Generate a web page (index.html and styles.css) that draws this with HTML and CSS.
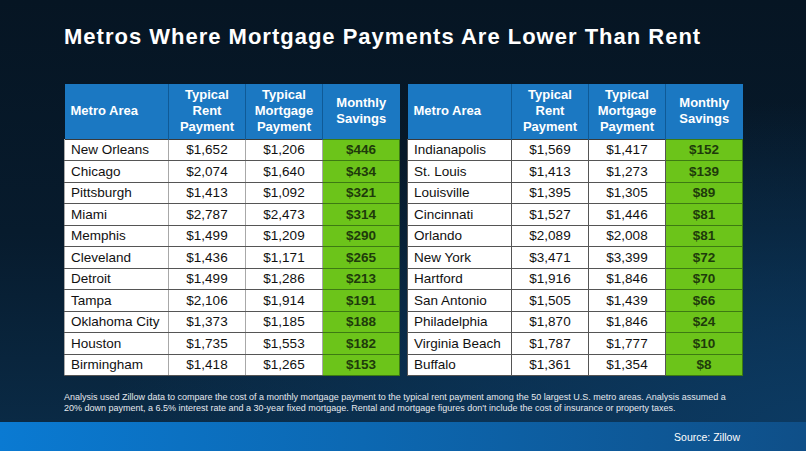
FILE: index.html
```html
<!DOCTYPE html>
<html>
<head>
<meta charset="utf-8">
<link rel="stylesheet" href="styles.css">
</head>
<body>
<div class="slide">
  <div class="main">
    <h1 class="title">Metros Where Mortgage Payments Are Lower Than Rent</h1>
    <div class="tables">
      <table class="data left">
        <thead>
          <tr><th class="metro">Metro Area</th><th>Typical<br>Rent<br>Payment</th><th>Typical<br>Mortgage<br>Payment</th><th>Monthly<br>Savings</th></tr>
        </thead>
        <tbody>
          <tr><td class="metro">New Orleans</td><td>$1,652</td><td>$1,206</td><td class="sav">$446</td></tr>
          <tr><td class="metro">Chicago</td><td>$2,074</td><td>$1,640</td><td class="sav">$434</td></tr>
          <tr><td class="metro">Pittsburgh</td><td>$1,413</td><td>$1,092</td><td class="sav">$321</td></tr>
          <tr><td class="metro">Miami</td><td>$2,787</td><td>$2,473</td><td class="sav">$314</td></tr>
          <tr><td class="metro">Memphis</td><td>$1,499</td><td>$1,209</td><td class="sav">$290</td></tr>
          <tr><td class="metro">Cleveland</td><td>$1,436</td><td>$1,171</td><td class="sav">$265</td></tr>
          <tr><td class="metro">Detroit</td><td>$1,499</td><td>$1,286</td><td class="sav">$213</td></tr>
          <tr><td class="metro">Tampa</td><td>$2,106</td><td>$1,914</td><td class="sav">$191</td></tr>
          <tr><td class="metro">Oklahoma City</td><td>$1,373</td><td>$1,185</td><td class="sav">$188</td></tr>
          <tr><td class="metro">Houston</td><td>$1,735</td><td>$1,553</td><td class="sav">$182</td></tr>
          <tr><td class="metro">Birmingham</td><td>$1,418</td><td>$1,265</td><td class="sav">$153</td></tr>
        </tbody>
      </table>
      <table class="data right">
        <thead>
          <tr><th class="metro">Metro Area</th><th>Typical<br>Rent<br>Payment</th><th>Typical<br>Mortgage<br>Payment</th><th>Monthly<br>Savings</th></tr>
        </thead>
        <tbody>
          <tr><td class="metro">Indianapolis</td><td>$1,569</td><td>$1,417</td><td class="sav">$152</td></tr>
          <tr><td class="metro">St. Louis</td><td>$1,413</td><td>$1,273</td><td class="sav">$139</td></tr>
          <tr><td class="metro">Louisville</td><td>$1,395</td><td>$1,305</td><td class="sav">$89</td></tr>
          <tr><td class="metro">Cincinnati</td><td>$1,527</td><td>$1,446</td><td class="sav">$81</td></tr>
          <tr><td class="metro">Orlando</td><td>$2,089</td><td>$2,008</td><td class="sav">$81</td></tr>
          <tr><td class="metro">New York</td><td>$3,471</td><td>$3,399</td><td class="sav">$72</td></tr>
          <tr><td class="metro">Hartford</td><td>$1,916</td><td>$1,846</td><td class="sav">$70</td></tr>
          <tr><td class="metro">San Antonio</td><td>$1,505</td><td>$1,439</td><td class="sav">$66</td></tr>
          <tr><td class="metro">Philadelphia</td><td>$1,870</td><td>$1,846</td><td class="sav">$24</td></tr>
          <tr><td class="metro">Virginia Beach</td><td>$1,787</td><td>$1,777</td><td class="sav">$10</td></tr>
          <tr><td class="metro">Buffalo</td><td>$1,361</td><td>$1,354</td><td class="sav">$8</td></tr>
        </tbody>
      </table>
    </div>
    <p class="note">Analysis used Zillow data to compare the cost of a monthly mortgage payment to the typical rent payment among the 50 largest U.S. metro areas. Analysis assumed a 20% down payment, a 6.5% interest rate and a 30-year fixed mortgage. Rental and mortgage figures don't include the cost of insurance or property taxes.</p>
  </div>
  <div class="band">
    <span class="source">Source: Zillow</span>
  </div>
</div>
</body>
</html>
```

FILE: styles.css
```css
html, body {
  margin: 0;
  padding: 0;
}
body {
  width: 806px;
  height: 451px;
  overflow: hidden;
  font-family: "Liberation Sans", Arial, sans-serif;
}
.slide {
  width: 806px;
  height: 451px;
  display: flex;
  flex-direction: column;
}
.main {
  height: 422px;
  box-sizing: border-box;
  padding: 24px 0 0 64px;
  background:
    radial-gradient(ellipse 700px 320px at 100% 100%, #0c3a62 0%, rgba(12,58,98,0) 100%),
    linear-gradient(180deg, #061523 0%, #071b2d 55%, #0a2a45 100%);
}
.title {
  margin: 0;
  font-size: 22px;
  line-height: 26px;
  font-weight: bold;
  color: #ffffff;
  letter-spacing: 1px;
}
.tables {
  display: flex;
  gap: 7px;
  margin-top: 34px;
}
.data {
  border-collapse: collapse;
  table-layout: fixed;
}
.data th {
  background: #1b78c2;
  color: #ffffff;
  font-weight: bold;
  font-size: 13px;
  line-height: 16px;
  height: 55px;
  padding: 0;
  text-align: center;
  width: 77px;
  border-left: 1px solid #0f5a97;
  box-sizing: border-box;
}
.data th.metro {
  text-align: left;
  padding-left: 6px;
  width: 104px;
  border-left: none;
}
.data td {
  background: #ffffff;
  color: #111;
  font-size: 13.5px;
  height: 21.5px;
  padding: 0;
  text-align: center;
  border: 1px solid #555;
  border-top: 1px solid #3a3a3a;
  box-sizing: border-box;
}
.left td {
  border-left-color: #a8a8a8;
  border-right-color: #a8a8a8;
}
.data td.metro {
  text-align: left;
  padding-left: 6px;
}
.data td.sav {
  background: #6cc41a;
  color: #1e3b0b;
  font-weight: bold;
  border-color: #3d7a12;
}
.note {
  margin: 16px 0 0 0;
  width: 680px;
  font-size: 9px;
  line-height: 11px;
  color: #e6e9ee;
}
.band {
  height: 29px;
  display: flex;
  align-items: center;
  justify-content: flex-end;
  padding-right: 66px;
  background: linear-gradient(90deg, #0a7ad2 0%, #0c68b2 45%, #0f4f88 100%);
}
.source {
  font-size: 10.5px;
  color: #ffffff;
}
```
